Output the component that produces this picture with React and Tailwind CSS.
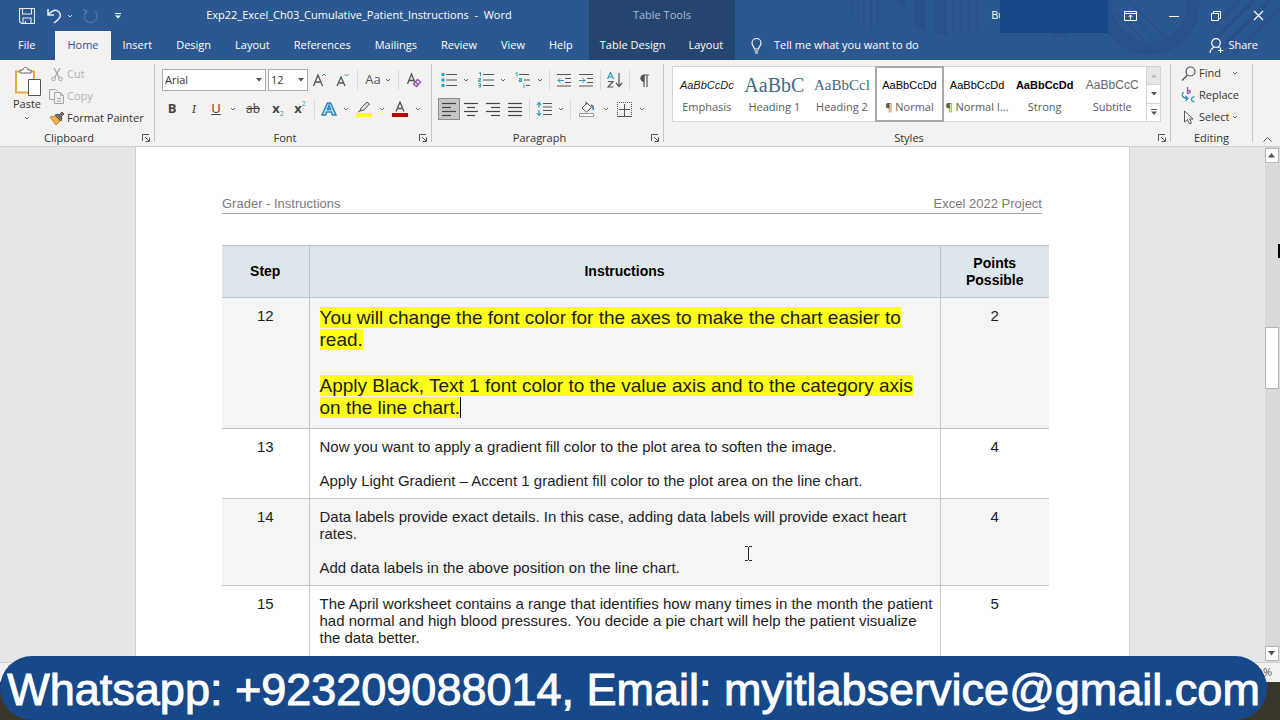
import clsx from 'clsx';

const TABS = ['File', 'Home', 'Insert', 'Design', 'Layout', 'References', 'Mailings', 'Review', 'View', 'Help'];

const STYLES = [
  { name: 'Emphasis', sample: 'AaBbCcDc', look: 'text-[11px] italic text-[#222]' },
  { name: 'Heading 1', sample: 'AaBbC', look: 'font-["Liberation_Serif"] text-[20px] text-[#44687f]' },
  { name: 'Heading 2', sample: 'AaBbCcl', look: 'font-["Liberation_Serif"] text-[15px] text-[#44687f]' },
  { name: '¶ Normal', sample: 'AaBbCcDd', look: 'text-[11px] text-black', active: true },
  { name: '¶ Normal I...', sample: 'AaBbCcDd', look: 'text-[11px] text-black' },
  { name: 'Strong', sample: 'AaBbCcDd', look: 'text-[11px] font-bold text-black' },
  { name: 'Subtitle', sample: 'AaBbCcC', look: 'text-[12px] text-[#666]' },
];

const STEPS = [
  {
    step: 12,
    points: 2,
    marked: true,
    text: [
      'You will change the font color for the axes to make the chart easier to read.',
      'Apply Black, Text 1 font color to the value axis and to the category axis on the line chart.',
    ],
  },
  {
    step: 13,
    points: 4,
    text: [
      'Now you want to apply a gradient fill color to the plot area to soften the image.',
      'Apply Light Gradient – Accent 1 gradient fill color to the plot area on the line chart.',
    ],
  },
  {
    step: 14,
    points: 4,
    text: [
      'Data labels provide exact details. In this case, adding data labels will provide exact heart rates.',
      'Add data labels in the above position on the line chart.',
    ],
  },
  {
    step: 15,
    points: 5,
    text: [
      'The April worksheet contains a range that identifies how many times in the month the patient had normal and high blood pressures. You decide a pie chart will help the patient visualize the data better.',
    ],
  },
];

function Icon({ w = 16, h = 16, children, className }) {
  return (
    <svg width={w} height={h} viewBox={`0 0 ${w} ${h}`} fill="none" stroke="#555" className={clsx('shrink-0', className)} aria-hidden="true">
      {children}
    </svg>
  );
}

function Tool({ label, className = 'w-[22px]', children }) {
  return (
    <button type="button" aria-label={label} className={clsx('flex h-[22px] shrink-0 items-center justify-center', className)}>
      {children}
    </button>
  );
}

function Chevron() {
  return (
    <Icon w={6} h={4}>
      <path d="M1 1l2 2 2-2" stroke="#666" />
    </Icon>
  );
}

function More({ label }) {
  return (
    <Tool label={label} className="w-3">
      <Chevron />
    </Tool>
  );
}

function Sep() {
  return <div className="mx-[3px] h-5 w-px shrink-0 bg-[#d8d8d8]" />;
}

function Group({ title, className, launcher = true, children }) {
  return (
    <section className={clsx('flex shrink-0 flex-col', className)}>
      {children}
      <div className={clsx('relative mt-auto text-center leading-4', launcher && 'pr-4')}>
        {title}
        {launcher && (
          <button type="button" aria-label={`${title} settings`} className="absolute right-1 bottom-1">
            <Icon w={8} h={8}>
              <path d="M.5 7V.5H7M3 3l4 4M7.5 3.5v4h-4" />
            </Icon>
          </button>
        )}
      </div>
    </section>
  );
}

function Divider() {
  return <div className="my-1 w-px shrink-0 bg-[#c3c3c3]" />;
}

function Combo({ id, label, value, className }) {
  return (
    <div className={clsx('relative', className)}>
      <label htmlFor={id} className="sr-only">{label}</label>
      <select id={id} className="block h-[22px] w-full appearance-none border border-[#ababab] bg-white pl-[2px] text-[11px] leading-5">
        <option>{value}</option>
      </select>
      <Icon w={6} h={4} className="pointer-events-none absolute top-[9px] right-1">
        <path d="M0 0h6L3 3.5z" fill="#555" stroke="none" />
      </Icon>
    </div>
  );
}

function Lines({ rows }) {
  return (
    <Icon w={16} h={16}>
      {rows.map(([x1, x2], i) => (
        <path key={i} d={`M${x1} ${2.5 + i * 4}H${x2}`} stroke="#444" strokeWidth="1.2" />
      ))}
    </Icon>
  );
}

function TitleBar() {
  return (
    <header className="flex h-[60px] shrink-0 bg-[#2b5891] text-[11px] text-white">
      <div className="flex flex-col">
        <div className="flex h-[31px] items-center pl-[19px]">
          <button type="button" aria-label="Save">
            <Icon w={16} h={16}>
              <path d="M.5.5h15v15H2.500L.5 13.500zM3.500.5v5.500h9V.5M4 15.500V10h8v5.500M6.500 13v2.500" stroke="#e4ecf6" strokeWidth="1.1" />
            </Icon>
          </button>
          <button type="button" aria-label="Undo" className="ml-3">
            <Icon w={15} h={16}>
              <path d="M1 1v6h6M1.500 6.500C5 2 9 1 12 4c3 3.500 1 6.500-5 11" stroke="#e4ecf6" strokeWidth="1.5" />
            </Icon>
          </button>
          <button type="button" aria-label="Undo list" className="ml-[5px]">
            <Icon w={6} h={4}><path d="M1 1l2 2 2-2" stroke="#d5e0ef" /></Icon>
          </button>
          <button type="button" aria-label="Redo" className="ml-[9px]">
            <Icon w={17} h={16}>
              <path d="M4 3.500A6.500 6.500 0 1 0 12 2.500M1 1.500l4 1.500L3.500 7" stroke="#4a74ad" strokeWidth="1.4" />
            </Icon>
          </button>
          <button type="button" aria-label="Customize toolbar" className="ml-4">
            <Icon w={6} h={6}><path d="M0 .5h6" stroke="#fff" /><path d="M0 2.500h6L3 5.500z" fill="#fff" stroke="none" /></Icon>
          </button>
          <h1 className="flex-1 pl-3 text-center whitespace-pre">Exp22_Excel_Ch03_Cumulative_Patient_Instructions  -  Word</h1>
        </div>
        <nav className="flex h-[29px] pl-1.5">
          {TABS.map(tab => (
            <button
              key={tab}
              type="button"
              className={clsx('px-3', tab === 'File' && 'mr-2', tab === 'Home' && 'bg-[#f3f2f1] text-[#2b5891]')}
            >
              {tab}
            </button>
          ))}
        </nav>
      </div>

      <div className="ml-1 flex shrink-0 flex-col bg-[#24456f]">
        <div className="flex h-[31px] items-center justify-center text-[#a9bdd8]">Table Tools</div>
        <nav className="flex h-[29px]">
          <button type="button" className="px-[11px]">Table Design</button>
          <button type="button" className="px-3">Layout</button>
        </nav>
      </div>

      <div className="relative flex flex-1 flex-col overflow-hidden">
        <svg className="absolute top-0 right-0" width="440" height="60" viewBox="840 0 440 60" fill="none" stroke="#29528b" aria-hidden="true">
          <path d="M852 0v15M858 0v22M864 0v30M871 0v34M878 0v24" strokeWidth="2" />
          <path d="M896 0h9v12zM913 0h12v31l-12-5zM935 0h12v36l-12-3z" fill="#29528b" stroke="none" />
          <path d="M953 0v34M961 0v34M969 0v32M977 0v28" strokeWidth="2" />
          <circle cx="1149" cy="4" r="44" strokeWidth="13" />
          <circle cx="1060" cy="22" r="15" fill="#29528b" stroke="none" />
          <path d="M1112 20l32 32M1116 12l38 38M1122 6l38 38M1130 2l36 36" strokeWidth="2" />
          <path d="M1280 8l-46 46M1270 0l-46 46M1254 0l-38 38M1240 0l-24 24" strokeWidth="4" />
        </svg>
        <div className="relative flex h-[31px] items-center justify-end">
          <div className="mr-4 flex items-center">
            <span>Bu</span>
            <div className="-ml-[5px] h-[34px] w-[108px] bg-[#17488a]" />
          </div>
          <button type="button" aria-label="Ribbon display options" className="mr-8">
            <Icon w={13} h={10}><path d="M.5.5h12v9H.5zM.5 2.500h12M6.500 8.500V4M4.500 6l2-2 2 2" stroke="#fff" /></Icon>
          </button>
          <button type="button" aria-label="Minimize" className="mr-8">
            <Icon w={10} h={10}><path d="M0 5.500h10" stroke="#fff" /></Icon>
          </button>
          <button type="button" aria-label="Restore" className="mr-8">
            <Icon w={10} h={10}><path d="M.5 2.500h7v7h-7zM2.500 2V.5h7v7H8" stroke="#fff" /></Icon>
          </button>
          <button type="button" aria-label="Close" className="mr-4">
            <Icon w={11} h={11}><path d="M1 1l9 9M10 1l-9 9" stroke="#fff" strokeWidth="1.2" /></Icon>
          </button>
        </div>
        <div className="relative flex h-[29px] items-center pr-[22px] pl-4">
          <Icon w={11} h={16}>
            <path d="M3.500 11C3.500 9 1 8 1 5a4.500 4.500 0 0 1 9 0c0 3-2.500 4-2.500 6zM3.500 13h4M4 15h3" stroke="#fff" strokeWidth="1.1" />
          </Icon>
          <button type="button" className="ml-3">Tell me what you want to do</button>
          <button type="button" className="ml-auto flex items-center gap-1">
            <Icon w={15} h={16}>
              <circle cx="7" cy="5" r="4.300" stroke="#fff" strokeWidth="1.200" />
              <path d="M1 15c.5-3 2-5 4-6M9 9l1.500 1M11.500 9.500v5.500M9 12.500h5.500" stroke="#fff" strokeWidth="1.200" />
            </Icon>
            Share
          </button>
        </div>
      </div>
    </header>
  );
}

function Clipboard() {
  return (
    <Group title="Clipboard" className="w-[154px]">
      <div className="flex pt-[3px] pl-[11px]">
        <button type="button" className="flex w-[32px] flex-col items-center pt-[3px]">
          <Icon w={28} h={30}>
            <path d="M3 5.500h18v21H3z" stroke="#e5a93c" strokeWidth="2" fill="#fbfbfb" />
            <path d="M7 7V4h3c0-3.500 5-3.500 5 0h3v3z" fill="#fff" stroke="#666" />
            <path d="M15.500 13.500h12v16h-12z" fill="#fff" stroke="#555" />
          </Icon>
          <span className="leading-4">Paste</span>
          <span className="mt-1"><Chevron /></span>
        </button>
        <div className="ml-[6px] flex flex-col">
          <button type="button" disabled className="flex h-[22px] items-center gap-[2px] text-[#b1b1b1]">
            <Icon w={16} h={15}>
              <path d="M5 1l5.500 10M11 1L5.500 11" stroke="#a6a6a6" strokeWidth="1.300" />
              <circle cx="4.500" cy="12" r="1.800" stroke="#a6a6a6" /><circle cx="11.500" cy="12" r="1.800" stroke="#a6a6a6" />
            </Icon>
            Cut
          </button>
          <button type="button" disabled className="flex h-[22px] items-center gap-[2px] text-[#b1b1b1]">
            <Icon w={16} h={15}>
              <path d="M5 10.500H.5V.5h6l2 2M5.500 3.500h6l3 3v8h-9zM11.500 3.500v3h3M8 9.500h4M8 12h4" stroke="#a6a6a6" />
            </Icon>
            Copy
          </button>
          <button type="button" className="flex h-[22px] items-center gap-[2px] whitespace-nowrap">
            <Icon w={16} h={15}>
              <path d="M1 6l6 8 4-4-4-5z" fill="#f3b14b" stroke="#d9822b" />
              <path d="M6 4l6 6 1-3-4-4zM10 4l3-3 2 2-3 3" fill="#777" stroke="#555" />
            </Icon>
            Format Painter
          </button>
        </div>
      </div>
    </Group>
  );
}

function FontGroup() {
  return (
    <Group title="Font" className="w-[276px]">
      <div className="flex flex-col gap-[7px] pt-[9px] pl-1.5">
        <div className="flex items-center">
          <Combo id="font" label="Font" value="Arial" className="ml-px w-[104px]" />
          <Combo id="size" label="Font size" value="12" className="ml-[2px] w-10" />
          <Tool label="Grow font" className="w-6">
            <Icon w={16} h={16}><path d="M1.500 14L6 3l4.500 11M3 10h6" strokeWidth="1.300" /><path d="M10 4l2-2 2 2" stroke="#2a9db5" /></Icon>
          </Tool>
          <Tool label="Shrink font">
            <Icon w={16} h={16}><path d="M2 14L6 5l4 9M3.500 11h5" strokeWidth="1.300" /><path d="M9.500 2l2 2 2-2" stroke="#2a9db5" /></Icon>
          </Tool>
          <Sep />
          <Tool label="Change case" className="w-[34px] gap-1 text-[13px] text-[#555]">Aa <Chevron /></Tool>
          <Sep />
          <Tool label="Clear formatting" className="w-6">
            <Icon w={16} h={16}>
              <path d="M1.500 12L5.500 2l4 10M3 8.500h5" strokeWidth="1.300" />
              <path d="M7.500 12l4-4.500 3 2.500-4 4.500zM9.500 10l3 2.500" fill="#f6eefa" stroke="#9a4fae" strokeWidth="1.300" />
            </Icon>
          </Tool>
        </div>
        <div className="flex items-center text-[13px] text-[#444]">
          <Tool label="Bold"><b>B</b></Tool>
          <Tool label="Italic"><i className="font-serif">I</i></Tool>
          <Tool label="Underline"><u>U</u></Tool>
          <More label="Underline styles" />
          <Tool label="Strikethrough" className="w-7"><s className="text-[12px]">ab</s></Tool>
          <Tool label="Subscript"><b>x</b><span className="self-end text-[7px] leading-3 text-[#2a9db5]">2</span></Tool>
          <Tool label="Superscript"><b>x</b><span className="self-start text-[7px] leading-3 text-[#2a9db5]">2</span></Tool>
          <Sep />
          <Tool label="Text effects">
            <Icon w={16} h={16}>
              <path d="M1 14L6.500 2h3L15 14h-3.500l-1-3h-5l-1 3zM6.500 8.500h3L8 4.500z" fill="#cfe8f7" stroke="#2e86c1" strokeWidth="1.600" />
            </Icon>
          </Tool>
          <More label="Text effects menu" />
          <Tool label="Highlight" className="w-6">
            <Icon w={16} h={16}>
              <path d="M4 10l1-3 6-6 2.500 2L8 9zM4 10l-2 1" fill="#ddd" />
              <path d="M0 12h16v4H0z" fill="#ffff1a" stroke="none" />
            </Icon>
          </Tool>
          <More label="Highlight colors" />
          <Tool label="Font color" className="w-6">
            <Icon w={16} h={16}>
              <path d="M4 10.500L8 1l4 9.500M5.500 7.500h5" strokeWidth="1.300" />
              <path d="M0 12h16v4H0z" fill="#c00000" stroke="none" />
            </Icon>
          </Tool>
          <More label="Font colors" />
        </div>
      </div>
    </Group>
  );
}

function ParagraphGroup() {
  return (
    <Group title="Paragraph" className="w-[231px]">
      <div className="flex flex-col gap-[7px] pt-[9px] pl-1.5">
        <div className="flex items-center">
          <Tool label="Bullets">
            <Icon w={16} h={16}>
              <path d="M5 2.500h11M5 8h11M5 13.500h11" />
              <path d="M.5 1h3v3h-3zM.5 6.500h3v3h-3zM.5 12h3v3h-3z" fill="#2a9db5" stroke="none" />
            </Icon>
          </Tool>
          <More label="Bullet styles" />
          <Tool label="Numbering" className="ml-[3px] w-[22px]">
            <Icon w={16} h={16}>
              <path d="M5 2.500h11M5 8h11M5 13.500h11" />
              <path d="M1 1.500L2.500.5V4M.5 6.500h2v1.500h-2v1.500h2.500M.5 11.500h2v3.500h-2M.5 13.500h2" stroke="#2a9db5" />
            </Icon>
          </Tool>
          <More label="Number styles" />
          <Tool label="Multilevel list" className="ml-[3px] w-[22px]">
            <Icon w={16} h={16}>
              <path d="M4 2.500h10M9 8h6M11 13.500h4" />
              <path d="M.5 1.500L2 .5V4M4 6.500h2.500v3H4V8h2.500M9 11v.5M9 12.500V16" stroke="#2a9db5" />
            </Icon>
          </Tool>
          <More label="Multilevel styles" />
          <Sep />
          <Tool label="Decrease indent">
            <Icon w={15} h={14}><path d="M0 1.500h14M8 5.500h6M8 9.500h6M0 13h14" /><path d="M7 7.500H1M3.500 5L1 7.500 3.500 10" stroke="#2a9db5" /></Icon>
          </Tool>
          <Tool label="Increase indent">
            <Icon w={15} h={14}><path d="M0 1.500h14M8 5.500h6M8 9.500h6M0 13h14" /><path d="M0 7.500h6M3.500 5L6 7.500 3.500 10" stroke="#2a9db5" /></Icon>
          </Tool>
          <Sep />
          <Tool label="Sort">
            <Icon w={16} h={16}>
              <path d="M.5 7L3.500.5 6.500 7M1.500 5h4" stroke="#2a9db5" strokeWidth="1.200" />
              <path d="M1 9.500h5L1 15h5.500M12 1v13M9 11l3 3.500 3-3.500" strokeWidth="1.200" />
            </Icon>
          </Tool>
          <Sep />
          <Tool label="Show paragraph marks">
            <Icon w={12} h={13}>
              <path d="M6 1v12M9 1v12M5 1h6" strokeWidth="1.200" /><path d="M6 1a3 3 0 0 0 0 6.500z" fill="#555" />
            </Icon>
          </Tool>
        </div>
        <div className="flex items-center">
          <Tool label="Align left" className="w-[22px] border border-[#8c8c8c] bg-[#c6c6c6]">
            <Lines rows={[[1, 15], [1, 10], [1, 15], [1, 10]]} />
          </Tool>
          <Tool label="Center"><Lines rows={[[1, 15], [4, 12], [1, 15], [4, 12]]} /></Tool>
          <Tool label="Align right"><Lines rows={[[1, 15], [6, 15], [1, 15], [6, 15]]} /></Tool>
          <Tool label="Justify"><Lines rows={[[1, 15], [1, 15], [1, 15], [1, 15]]} /></Tool>
          <Sep />
          <Tool label="Line spacing">
            <Icon w={16} h={16}>
              <path d="M7 2.500h9M7 6h9M7 9.500h9M7 13.500h9" />
              <path d="M3 1.500v5M1 4l2-2.500L5 4M3 9v5.500M1 12l2 2.500L5 12" stroke="#2a9db5" strokeWidth="1.200" />
            </Icon>
          </Tool>
          <More label="Spacing options" />
          <Sep />
          <Tool label="Shading" className="w-[26px]">
            <Icon w={16} h={16}>
              <path d="M3 7l5-5 4.500 4.500-5 4.500zM7 4V.5" fill="#fff" />
              <path d="M12 4c2 1 2.500 3 2 5" stroke="#3b6fa8" strokeWidth="1.600" />
              <path d="M.5 12.500h14v3H.5z" fill="#fff" stroke="#999" />
            </Icon>
          </Tool>
          <More label="Shading colors" />
          <Tool label="Borders" className="w-6">
            <Icon w={15} h={15}>
              <path d="M.5 0v14M14.500 0v14M0 .5h15" strokeDasharray="1 1" />
              <path d="M7.500 2v12M2 7.500h11M0 14.500h15" />
            </Icon>
          </Tool>
          <More label="Border styles" />
        </div>
      </div>
    </Group>
  );
}

function StylesGroup() {
  return (
    <Group title="Styles" className="min-w-[506px] flex-1">
      <div className="mt-[6px] mr-[9px] ml-2 flex h-[56px] border border-[#d4d4d4] bg-white">
        <div className="grid flex-1 grid-cols-7">
          {STYLES.map(s => (
            <button
              key={s.name}
              type="button"
              className={clsx(
                'flex min-w-0 flex-col items-center pt-1 whitespace-nowrap',
                s.active && 'outline-2 -outline-offset-1 outline-[#a9a9a9]'
              )}
            >
              <span className={clsx('h-7 font-["Liberation_Sans"] leading-7', s.look)}>{s.sample}</span>
              <span className="leading-4 text-[#5a5a5a]">{s.name}</span>
            </button>
          ))}
        </div>
        <div className="flex w-[14px] flex-col divide-y divide-[#d4d4d4] border-l border-[#d4d4d4]">
          <button type="button" aria-label="Previous styles" className="flex flex-1 items-center justify-center bg-[#e6e6e6]">
            <Icon w={6} h={4}><path d="M0 3.500h6L3 0z" fill="#bbb" stroke="none" /></Icon>
          </button>
          <button type="button" aria-label="Next styles" className="flex flex-1 items-center justify-center">
            <Icon w={6} h={4}><path d="M0 0h6L3 3.500z" fill="#555" stroke="none" /></Icon>
          </button>
          <button type="button" aria-label="All styles" className="flex flex-1 items-center justify-center">
            <Icon w={6} h={6}><path d="M0 .5h6" /><path d="M0 2.500h6L3 6z" fill="#555" stroke="none" /></Icon>
          </button>
        </div>
      </div>
    </Group>
  );
}

function EditingGroup() {
  return (
    <Group title="Editing" className="w-[81px]" launcher={false}>
      <div className="flex flex-col pt-[2px] pl-[10px]">
        <button type="button" className="flex h-[22px] items-center gap-[3px]">
          <Icon w={15} h={15}><circle cx="9.500" cy="5.500" r="4.500" strokeWidth="1.200" /><path d="M6.500 9L1 14.500" strokeWidth="1.400" /></Icon>
          Find
          <span className="ml-2"><Chevron /></span>
        </button>
        <button type="button" className="flex h-[22px] items-center gap-[3px]">
          <Icon w={15} h={16}>
            <path d="M6.500 0v6.500M6.500 4c3-2 4.500 2.500 0 2.500" stroke="#9a4fae" strokeWidth="1.300" />
            <path d="M13.500 10c-4-1-4 5.500 0 4.500" stroke="#2a9db5" strokeWidth="1.300" />
            <path d="M2.500 5c-2.500 3-1 6.500 4 6.500M4.500 9l2.500 2.500L4.500 14" stroke="#2a8fc0" strokeWidth="1.200" />
          </Icon>
          Replace
        </button>
        <button type="button" className="flex h-[22px] items-center gap-[3px]">
          <Icon w={15} h={15}><path d="M3.500 1v11l3-2.500 2 4.500 2-1-2-4h3.500z" fill="#fff" /></Icon>
          Select
          <Chevron />
        </button>
      </div>
    </Group>
  );
}

function Ribbon() {
  return (
    <div className="flex h-[87px] shrink-0 border-b border-[#d2d0ce] bg-[#f3f2f1] text-[11px] text-[#333]">
      <Clipboard />
      <Divider />
      <FontGroup />
      <Divider />
      <ParagraphGroup />
      <Divider />
      <StylesGroup />
      <Divider />
      <EditingGroup />
      <Divider />
      <button type="button" aria-label="Collapse ribbon" className="flex w-[28px] shrink-0 items-end justify-center pb-1">
        <Icon w={9} h={6}><path d="M.5 5.500l4-4 4 4" /></Icon>
      </button>
    </div>
  );
}

function Page() {
  return (
    <article className="mx-auto min-h-full w-full max-w-[995px] border-x border-[#d0d0d0] bg-white pt-12 pr-20 pl-[86px] text-[15px] leading-[17px] text-[#1c1c1c]">
      <div className="mr-[7px] flex justify-between border-b border-[#a0a0a0] pb-px text-[13px] leading-[17px] text-[#7a7a7a]">
        <span>Grader - Instructions</span>
        <span>Excel 2022 Project</span>
      </div>
      <table className="mt-[31px] w-full table-fixed border-collapse">
        <colgroup>
          <col className="w-[87px]" />
          <col />
          <col className="w-[109px]" />
        </colgroup>
        <thead>
          <tr className="h-[52px] border-y border-[#bcc3c8] bg-[#dce6ec] text-[14px] text-black">
            <th>Step</th>
            <th className="border-x border-[#bcc3c8]">Instructions</th>
            <th className="px-4">Points Possible</th>
          </tr>
        </thead>
        <tbody>
          {STEPS.map((row, i) => (
            <tr key={row.step} className={clsx('border-b border-[#c4c4c4] align-top', row.step === 15 && 'h-24', i % 2 === 0 && i < 3 && 'bg-[#f5f5f5]')}>
              <td className="py-[9px] text-center">{row.step}</td>
              <td className={clsx('border-x border-[#c4c4c4] py-[9px] pl-[10px]', row.marked ? 'pr-2 text-[19px] leading-[22px]' : 'pr-1')}>
                {row.text.map((line, n) => (
                  <p key={n} className={clsx(n > 0 && (row.marked ? 'mt-6' : 'mt-[17px]'))}>
                    <span className={clsx(row.marked && 'bg-[#ffff1a]', row.marked && n === 1 && 'border-r border-black')}>{line}</span>
                  </p>
                ))}
              </td>
              <td className="py-[9px] text-center">{row.points}</td>
            </tr>
          ))}
        </tbody>
      </table>
    </article>
  );
}

function Scrollbar() {
  return (
    <div className="relative flex w-[15px] shrink-0 flex-col justify-between bg-[#dadada] py-px pr-px">
      <button type="button" aria-label="Scroll up" className="flex h-[15px] items-center justify-center border border-[#b5b5b5] bg-white">
        <Icon w={8} h={5}><path d="M0 4.500h7L3.500 0z" fill="#555" stroke="none" /></Icon>
      </button>
      <div className="absolute top-[35%] right-px left-0 h-[62px] border border-[#b5b5b5] bg-white" />
      <button type="button" aria-label="Scroll down" className="flex h-[15px] items-center justify-center border border-[#b5b5b5] bg-white">
        <Icon w={8} h={5}><path d="M0 0h7L3.500 4.500z" fill="#555" stroke="none" /></Icon>
      </button>
    </div>
  );
}

export default function App() {
  return (
    <div className='relative flex h-screen flex-col overflow-hidden font-["Open_Sans",sans-serif]'>
      <TitleBar />
      <Ribbon />
      <main className='flex min-h-0 flex-1 bg-[#e6e6e6] font-["Liberation_Sans",sans-serif]'>
        <div className="min-w-0 flex-1 overflow-hidden">
          <Page />
        </div>
        <Scrollbar />
      </main>
      <footer className="shrink-0">
        <div className="flex h-5 items-center justify-end border-t border-[#d0d0d0] bg-[#f3f2f1] pr-2 text-[11px] text-[#555]">%</div>
        <div className="h-[38px] bg-[#38372a]" />
      </footer>

      {/* mouse pointers */}
      <Icon w={9} h={15} className="absolute top-[546px] left-[744px]">
        <path d="M1 .5h2.500l1 1 1-1H8M4.500 1.500v12M1 14.500h2.500l1-1 1 1H8" stroke="#222" />
      </Icon>
      <div className="absolute top-[244px] right-0 h-[14px] w-[2px] bg-black" />

      <div className='absolute bottom-0 left-0 flex h-16 w-[99%] items-center justify-center rounded-[32px] bg-[#17488a] pt-1 font-["Liberation_Sans",sans-serif] text-[45px] whitespace-nowrap text-white [-webkit-text-stroke:1px_white]'>
        Whatsapp: +923209088014, Email: myitlabservice@gmail.com
      </div>
    </div>
  );
}
